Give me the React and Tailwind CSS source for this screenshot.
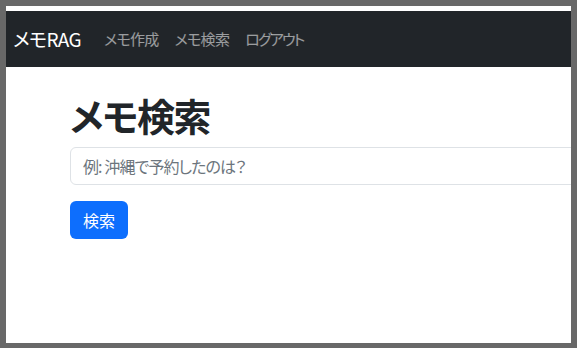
import React from "react";

const jp = "font-['Noto_Sans_CJK_JP','Noto_Sans',sans-serif] [font-feature-settings:'palt']";

export default function App() {
  return (
    <div className="w-[577px] h-[348px] bg-[#686868] pt-[6px] pl-[6px] pr-[6px] pb-[5px]">
      <div className={`h-full w-full bg-white overflow-hidden flex flex-col ${jp}`}>
        <div className="h-[5px] shrink-0 bg-white" />
        <nav className="h-[56px] shrink-0 bg-[#212529] flex items-center pl-[7px]">
          <span className="text-[19px] leading-[30px] tracking-[-0.6px] text-white mr-[15px]">メモRAG</span>
          <div className="flex items-center">
            <a className="px-[8px] text-[15px] leading-[24px] tracking-[-0.7px] text-white/55">メモ作成</a>
            <a className="px-[8px] text-[15px] leading-[24px] tracking-[-0.7px] text-white/55">メモ検索</a>
            <a className="px-[8px] text-[15px] leading-[24px] tracking-[-1.8px] text-white/55">ログアウト</a>
          </div>
        </nav>
        <main className="pl-[64px] pt-[24px]">
          <h1 className="text-[38px] leading-[48px] font-semibold tracking-[-1.5px] text-[#212529] mb-[8px]">メモ検索</h1>
          <div className="w-[700px] h-[38px] border border-[#dee2e6] rounded-[6px] flex items-center px-[12px] mb-[16px]">
            <span className="text-[16px] tracking-[-0.9px] text-[#6c757d]">例: 沖縄で予約したのは？</span>
          </div>
          <button className="h-[38px] px-[13px] rounded-[6px] bg-[#0d6efd] text-white text-[16px]">検索</button>
        </main>
      </div>
    </div>
  );
}
